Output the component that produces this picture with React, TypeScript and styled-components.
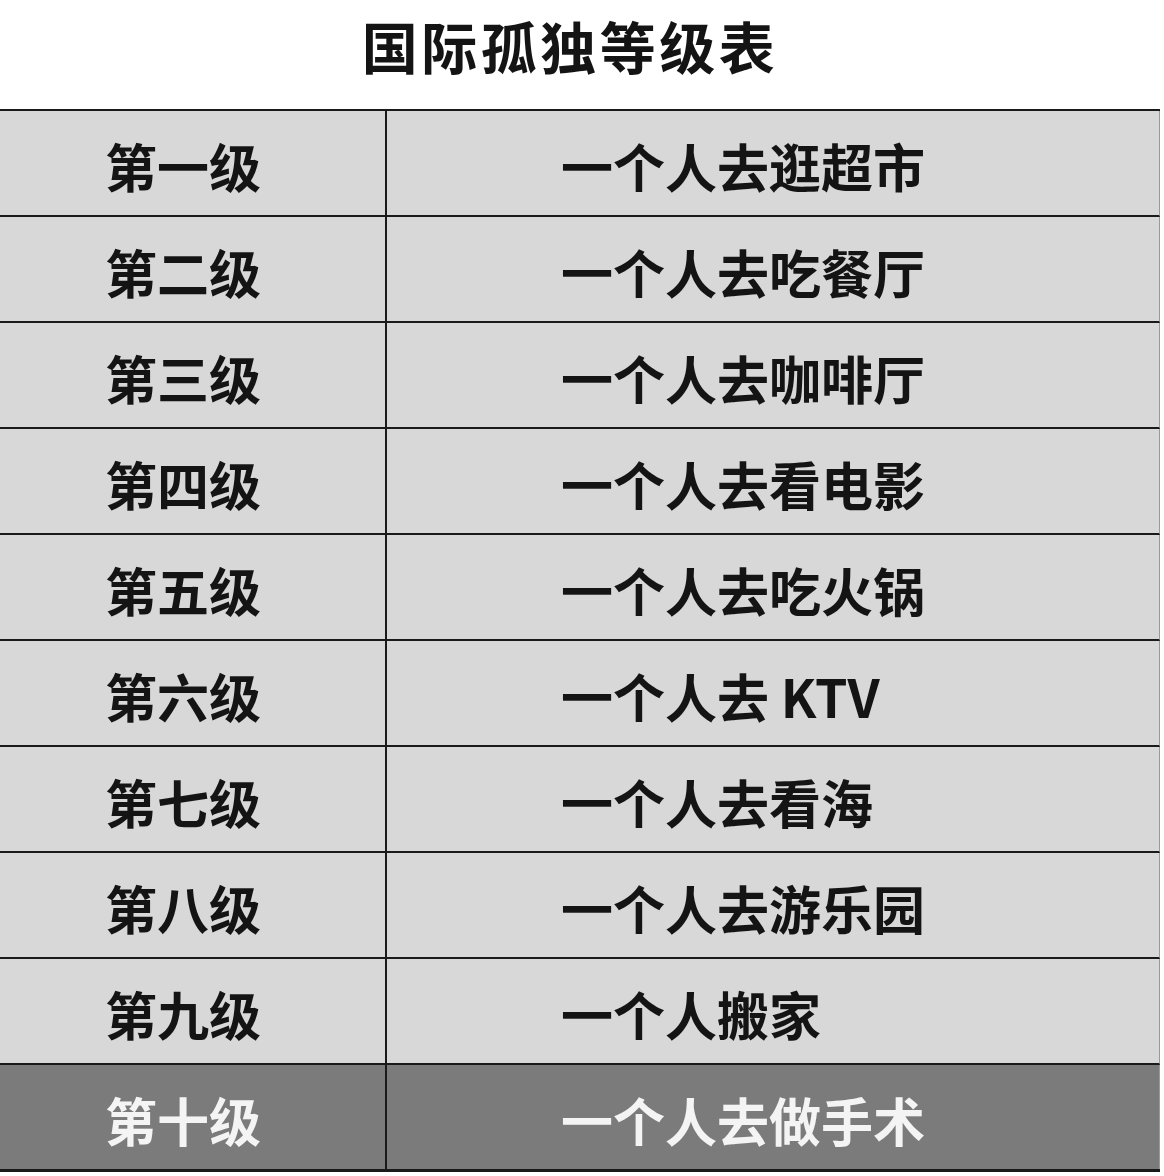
import styled, { createGlobalStyle } from 'styled-components';

const GlobalStyle = createGlobalStyle`
    html, body {
        margin: 0;
        padding: 0;
        background: #fff;
    }
    body {
        font-family: "Noto Sans CJK SC", "Noto Sans", sans-serif;
    }
`;

const Page = styled.div`
    width: 1164px;
    height: 1176px;
    background: #fff;
    overflow: hidden;
`;

const Title = styled.h1`
    margin: 0;
    height: 109px;
    width: 1140px;
    display: flex;
    align-items: center;
    justify-content: center;
    font-size: 56px;
    font-weight: 700;
    letter-spacing: 3.5px;
    color: #141414;
    padding-bottom: 20px;
    box-sizing: border-box;
`;

const Table = styled.div`
    width: 1160px;
    border-top: 2px solid #1a1a1a;
    border-bottom: 3px solid #1a1a1a;
    display: grid;
    grid-template-columns: 387px 1fr;
`;

const Cell = styled.div<{ $dark?: boolean; $last?: boolean }>`
    box-sizing: border-box;
    display: flex;
    align-items: center;
    background: ${p => (p.$dark ? '#7b7b7b' : '#d8d8d8')};
    color: ${p => (p.$dark ? '#f4f4f4' : '#141414')};
    border-bottom: ${p => (p.$last ? 'none' : '2px solid #1a1a1a')};
    height: ${p => (p.$last ? '104px' : '106px')};
    font-size: 52px;
    font-weight: 700;
    padding-top: 4px;
`;

const LevelCell = styled(Cell)`
    padding-left: 105px;
    border-right: 2px solid #1a1a1a;
`;

const ActivityCell = styled(Cell)`
    padding-left: 174px;
    border-right: 1px solid #9a9a9a;
`;

const levels = [
    ['第一级', '一个人去逛超市'],
    ['第二级', '一个人去吃餐厅'],
    ['第三级', '一个人去咖啡厅'],
    ['第四级', '一个人去看电影'],
    ['第五级', '一个人去吃火锅'],
    ['第六级', '一个人去 KTV'],
    ['第七级', '一个人去看海'],
    ['第八级', '一个人去游乐园'],
    ['第九级', '一个人搬家'],
    ['第十级', '一个人去做手术'],
];

export default function App() {
    return <Page>
        <GlobalStyle />
        <Title>国际孤独等级表</Title>
        <Table>
            {
                levels.map(([level, activity], i) => {
                    const dark = i === levels.length - 1;
                    return [
                        <LevelCell key={level} $dark={dark} $last={dark}>{level}</LevelCell>,
                        <ActivityCell key={activity} $dark={dark} $last={dark}>{activity}</ActivityCell>
                    ];
                })
            }
        </Table>
    </Page>;
}
